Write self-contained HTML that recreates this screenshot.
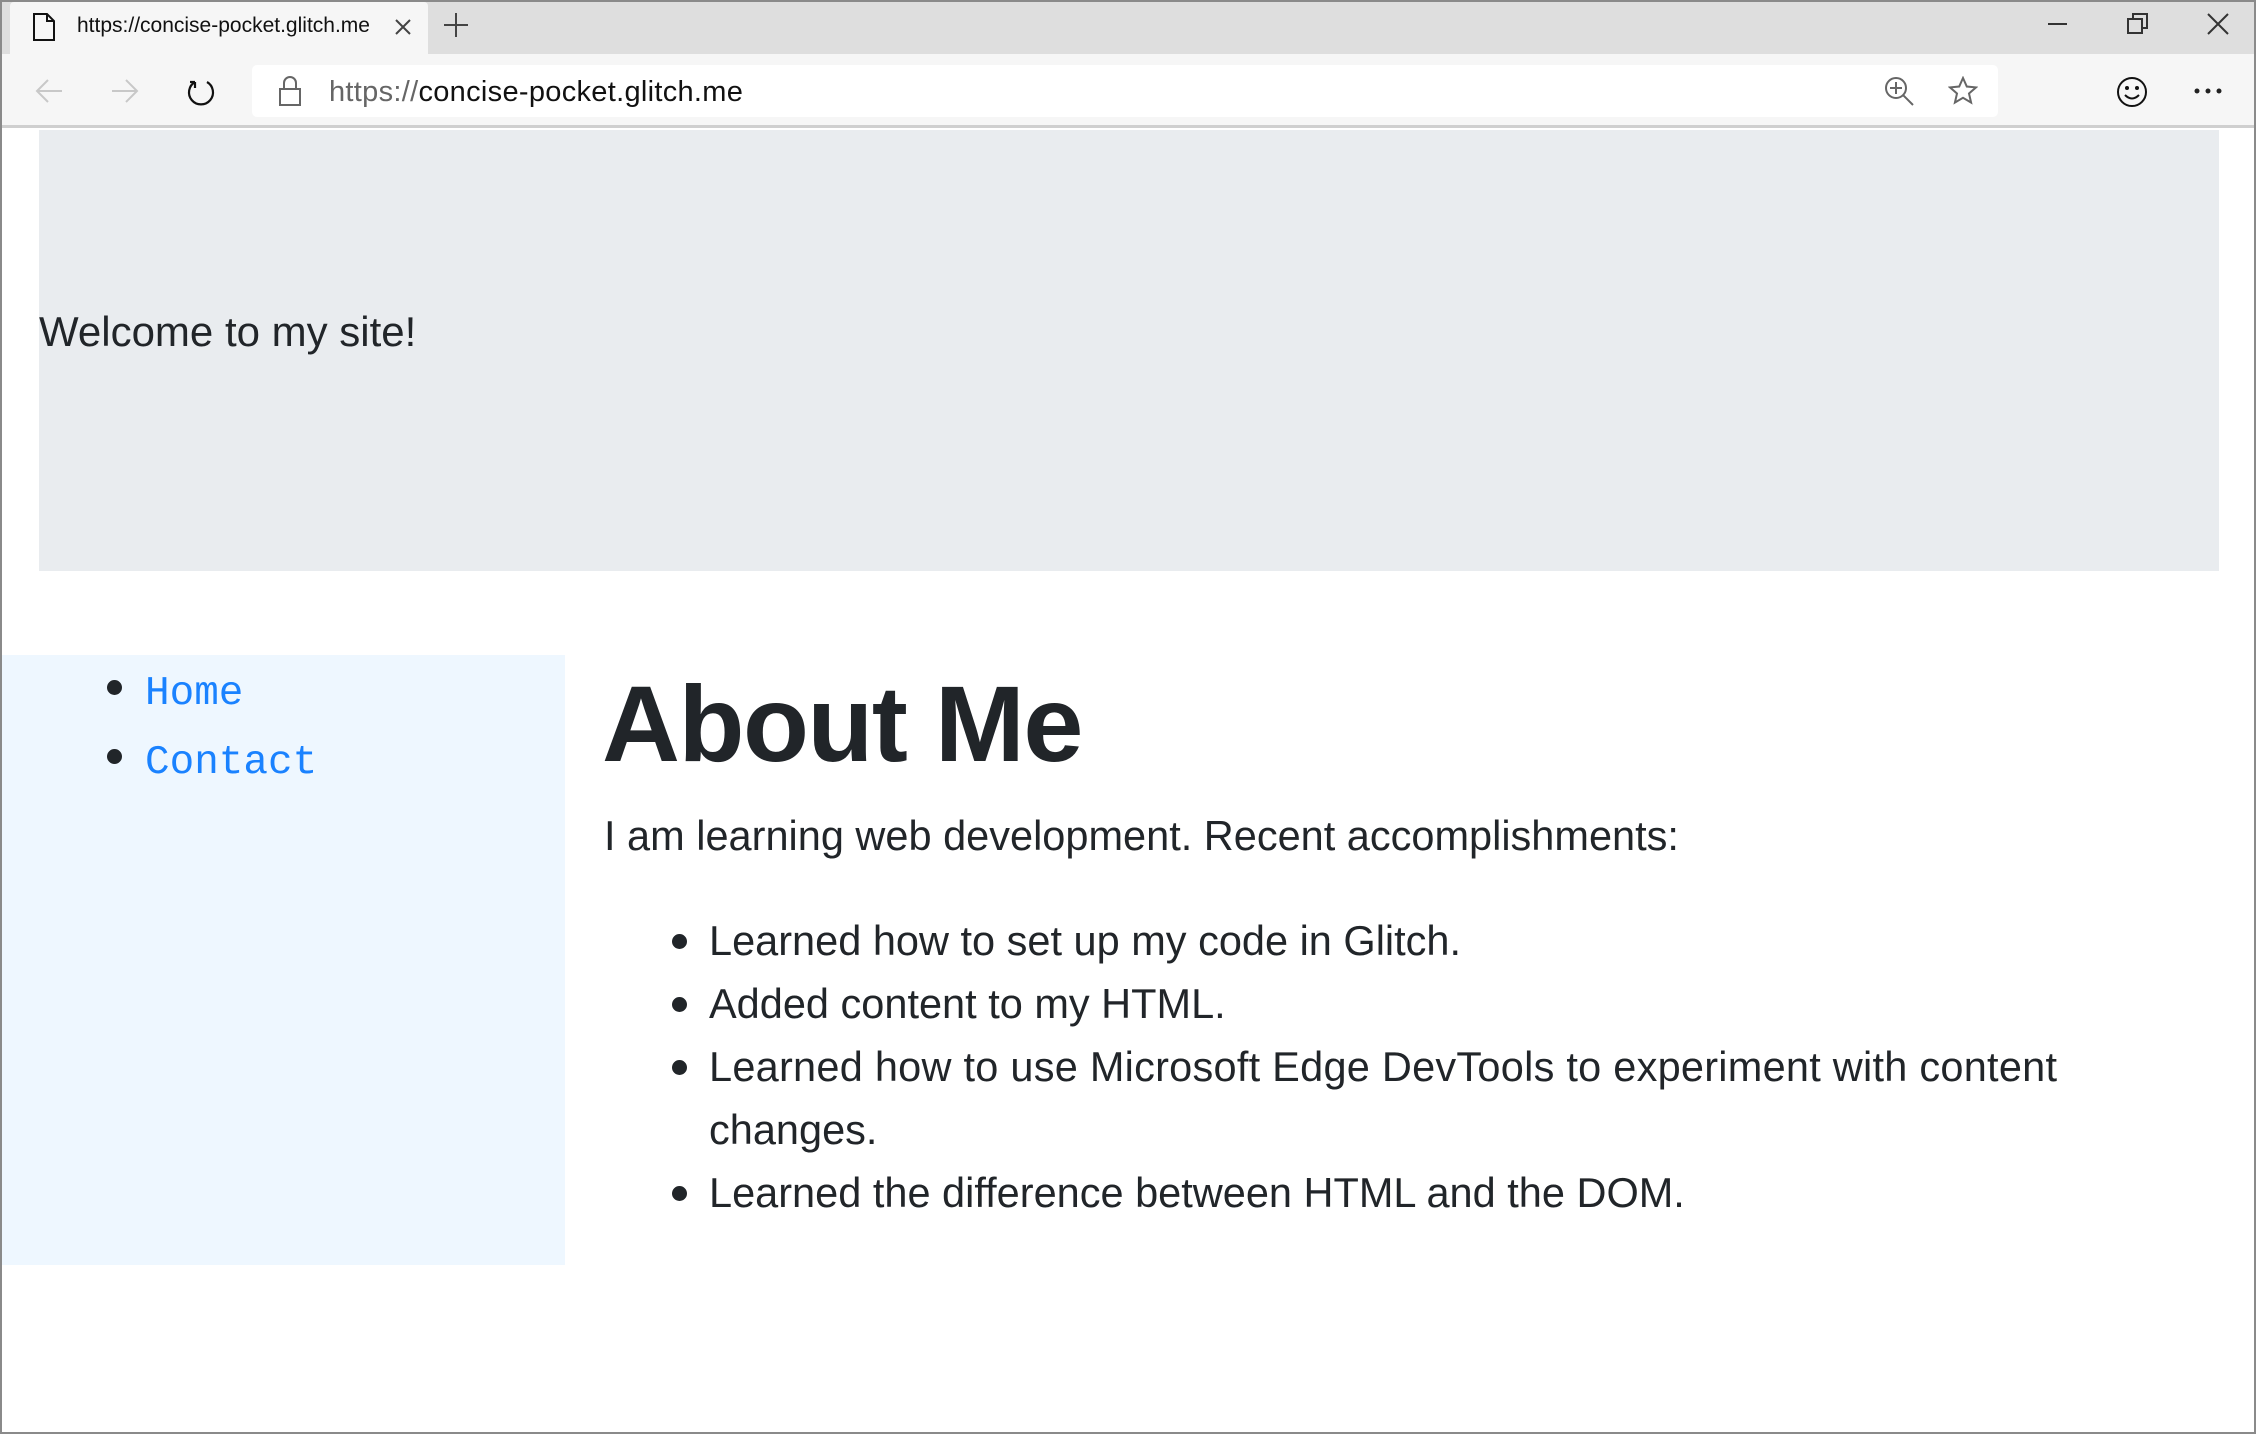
<!DOCTYPE html>
<html><head><meta charset="utf-8"><style>
*{margin:0;padding:0;box-sizing:border-box}
html,body{width:2256px;height:1434px;overflow:hidden;background:#fff;font-family:"Liberation Sans",sans-serif;color:#212529}
.abs{position:absolute}
#win{position:absolute;left:0;top:0;width:2256px;height:1434px;border:2px solid #8a8a8a;border-top:none}
#tabs{left:0;top:0;width:2256px;height:54px;background:#dedede;border-top:2px solid #8a8a8a}
#tab{left:10px;top:2px;width:418px;height:52px;background:#f6f6f6;border-radius:4px 4px 0 0}
#bar{left:0;top:54px;width:2256px;height:74px;background:#f6f6f6;border-bottom:3px solid #cfcfcf}
#addr{left:252px;top:65px;width:1746px;height:52px;background:#fff;border-radius:5px}
.t{font-family:"Liberation Sans",sans-serif;white-space:nowrap}
#hdr{left:39px;top:130px;width:2180px;height:441px;background:#e9ecef}
#side{left:0;top:655px;width:565px;height:610px;background:#eef7ff}
.mono{font-family:"Liberation Mono",monospace;color:#1a82ff;font-size:41px}
.dot{width:15px;height:15px;border-radius:50%;background:#212529}
.li{font-size:41.5px;white-space:nowrap}
</style></head><body>
<div id="tabs" class="abs"></div>
<div id="tab" class="abs"></div>
<svg class="abs" style="left:32px;top:13px" width="24" height="28" viewBox="0 0 24 28"><path d="M2 1h13l7 7v19H2z M15 1v7h7" fill="none" stroke="#111" stroke-width="2"/></svg>
<div class="abs t" style="left:77px;top:14px;font-size:21px;color:#111">https://concise-pocket.glitch.me</div>
<svg class="abs" style="left:394px;top:18px" width="18" height="18"><path d="M2 2L16 16M16 2L2 16" stroke="#444" stroke-width="2"/></svg>
<svg class="abs" style="left:443px;top:12px" width="26" height="26"><path d="M13 1v24M1 13h24" stroke="#444" stroke-width="2"/></svg>
<svg class="abs" style="left:2048px;top:22px" width="20" height="4"><path d="M0 2h19" stroke="#333" stroke-width="2"/></svg>
<svg class="abs" style="left:2127px;top:13px" width="22" height="22"><path d="M1 6h14v14H1z M6 6V1h14v14h-5" fill="none" stroke="#333" stroke-width="2"/></svg>
<svg class="abs" style="left:2207px;top:13px" width="22" height="22"><path d="M1 1L21 21M21 1L1 21" stroke="#333" stroke-width="2"/></svg>
<div id="bar" class="abs"></div>
<svg class="abs" style="left:34px;top:78px" width="30" height="26"><path d="M28 13H3M14 2L3 13l11 11" fill="none" stroke="#c8c8c8" stroke-width="2"/></svg>
<svg class="abs" style="left:110px;top:78px" width="30" height="26"><path d="M2 13h25M16 2l11 11-11 11" fill="none" stroke="#c8c8c8" stroke-width="2"/></svg>
<svg class="abs" style="left:186px;top:75px" width="30" height="32"><path d="M9 5A12 12 0 1 0 21 5M9 5H4M9 5v6" fill="none" stroke="#111" stroke-width="2.2" transform="translate(0,2)"/></svg>
<div id="addr" class="abs"></div>
<svg class="abs" style="left:278px;top:76px" width="24" height="30"><path d="M2 13h20v16H2z M6 13V7a6 6 0 0 1 12 0v6" fill="none" stroke="#666" stroke-width="2"/></svg>
<div class="abs t" style="left:329px;top:76px;font-size:29px;color:#111;letter-spacing:0.3px"><span style="color:#666">https://</span>concise-pocket.glitch.me</div>
<svg class="abs" style="left:1884px;top:76px" width="32" height="32"><circle cx="12" cy="12" r="10" fill="none" stroke="#666" stroke-width="2"/><path d="M12 6v12M6 12h12M19 19l10 10" stroke="#666" stroke-width="2"/></svg>
<svg class="abs" style="left:1948px;top:76px" width="30" height="30" viewBox="0 0 30 30"><path d="M15 2l3.8 8.5 9.2.9-7 6.1 2.1 9.1L15 21.8l-8.1 4.8 2.1-9.1-7-6.1 9.2-.9z" fill="none" stroke="#666" stroke-width="2"/></svg>
<svg class="abs" style="left:2116px;top:76px" width="32" height="32"><circle cx="16" cy="16" r="14" fill="none" stroke="#111" stroke-width="2"/><circle cx="11" cy="12" r="2" fill="#111"/><circle cx="21" cy="12" r="2" fill="#111"/><path d="M9 19q7 7 14 0" fill="none" stroke="#111" stroke-width="2"/></svg>
<svg class="abs" style="left:2194px;top:88px" width="30" height="6"><circle cx="3" cy="3" r="2.5" fill="#222"/><circle cx="14" cy="3" r="2.5" fill="#222"/><circle cx="25" cy="3" r="2.5" fill="#222"/></svg>

<div id="hdr" class="abs"></div>
<div class="abs t" style="left:39px;top:308px;font-size:42px">Welcome to my site!</div>

<div id="side" class="abs"></div>
<div class="abs dot" style="left:107px;top:680px"></div>
<div class="abs mono" style="left:145px;top:671px">Home</div>
<div class="abs dot" style="left:107px;top:749px"></div>
<div class="abs mono" style="left:145px;top:740px">Contact</div>

<div class="abs t" style="left:602px;top:661px;font-size:108px;font-weight:bold;letter-spacing:-1.5px">About Me</div>
<div class="abs t" style="left:604px;top:812px;font-size:41.5px">I am learning web development. Recent accomplishments:</div>
<div class="abs dot" style="left:672px;top:934px"></div>
<div class="abs li" style="left:709px;top:917px">Learned how to set up my code in Glitch.</div>
<div class="abs dot" style="left:672px;top:997px"></div>
<div class="abs li" style="left:709px;top:980px">Added content to my HTML.</div>
<div class="abs dot" style="left:672px;top:1060px"></div>
<div class="abs li" style="left:709px;top:1043px;letter-spacing:0.25px">Learned how to use Microsoft Edge DevTools to experiment with content</div>
<div class="abs li" style="left:709px;top:1106px">changes.</div>
<div class="abs dot" style="left:672px;top:1186px"></div>
<div class="abs li" style="left:709px;top:1169px">Learned the difference between HTML and the DOM.</div>
<div id="win"></div>
</body></html>
